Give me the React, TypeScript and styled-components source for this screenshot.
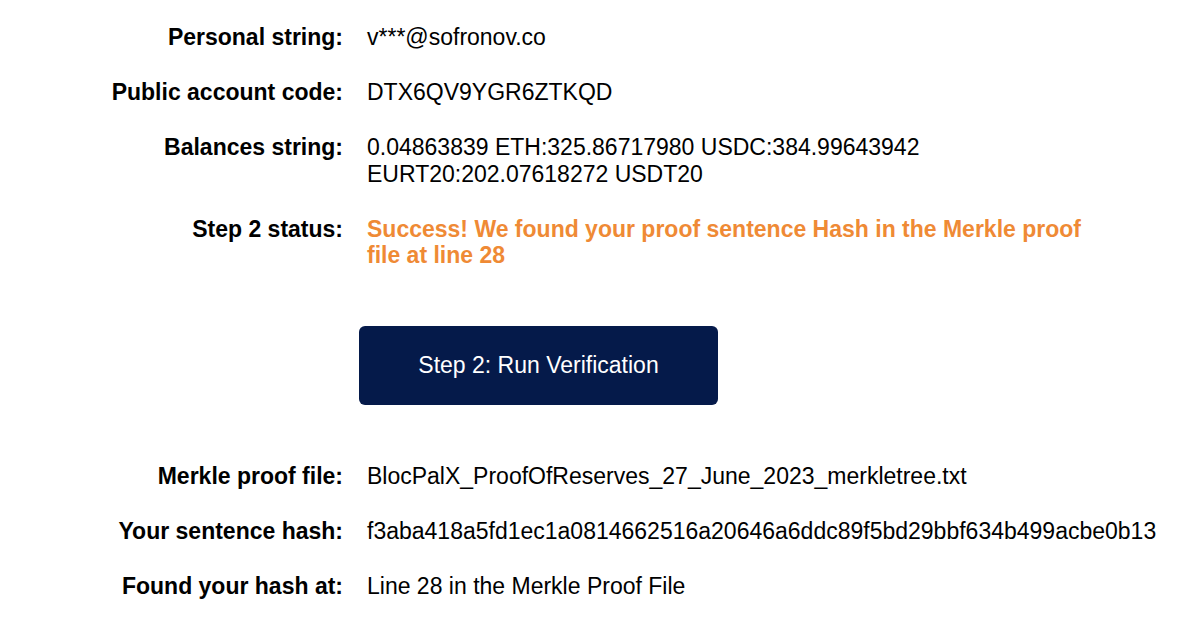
import React from "react";
import styled, { createGlobalStyle } from "styled-components";

const GlobalStyle = createGlobalStyle`
  html, body {
    margin: 0;
    padding: 0;
    background: #ffffff;
  }
  body {
    font-family: "Liberation Sans", Arial, Helvetica, sans-serif;
    color: #000000;
  }
`;

const Page = styled.main`
  width: 1200px;
  height: 628px;
  box-sizing: border-box;
  padding-top: 24px;
  overflow: hidden;
`;

const InfoGrid = styled.div`
  display: grid;
  grid-template-columns: 343px 730px;
  column-gap: 24px;
  row-gap: 28.5px;
  font-size: 23px;
  line-height: 26.5px;
`;

const Label = styled.div`
  font-weight: 700;
  text-align: right;
  white-space: nowrap;
`;

const Value = styled.div<{ $status?: boolean }>`
  font-weight: ${(p) => (p.$status ? 700 : 400)};
  color: ${(p) => (p.$status ? "#ef8a35" : "#000000")};
`;

const NoWrap = styled.div`
  white-space: nowrap;
`;

const ButtonRow = styled.div`
  grid-column: 1 / -1;
  padding-left: 359px;
  margin: 29px 0 29px;
`;

const VerifyButton = styled.button`
  width: 359px;
  height: 79px;
  border: none;
  border-radius: 6px;
  background: #051a4a;
  color: #ffffff;
  font-family: "Liberation Sans", Arial, Helvetica, sans-serif;
  font-size: 23px;
  font-weight: 400;
  cursor: pointer;
  display: flex;
  align-items: center;
  justify-content: center;
  padding: 0;
`;

export default function App() {
  return (
    <>
      <GlobalStyle />
      <Page>
        <InfoGrid>
          <Label>Personal string:</Label>
          <Value>v***@sofronov.co</Value>

          <Label>Public account code:</Label>
          <Value>DTX6QV9YGR6ZTKQD</Value>

          <Label>Balances string:</Label>
          <Value>
            0.04863839 ETH:325.86717980 USDC:384.99643942 EURT20:202.07618272
            USDT20
          </Value>

          <Label>Step 2 status:</Label>
          <Value $status>
            Success! We found your proof sentence Hash in the Merkle proof file
            at line 28
          </Value>

          <ButtonRow>
            <VerifyButton type="button">Step 2: Run Verification</VerifyButton>
          </ButtonRow>

          <Label>Merkle proof file:</Label>
          <NoWrap>BlocPalX_ProofOfReserves_27_June_2023_merkletree.txt</NoWrap>

          <Label>Your sentence hash:</Label>
          <NoWrap>
            f3aba418a5fd1ec1a0814662516a20646a6ddc89f5bd29bbf634b499acbe0b13
          </NoWrap>

          <Label>Found your hash at:</Label>
          <Value>Line 28 in the Merkle Proof File</Value>
        </InfoGrid>
      </Page>
    </>
  );
}
